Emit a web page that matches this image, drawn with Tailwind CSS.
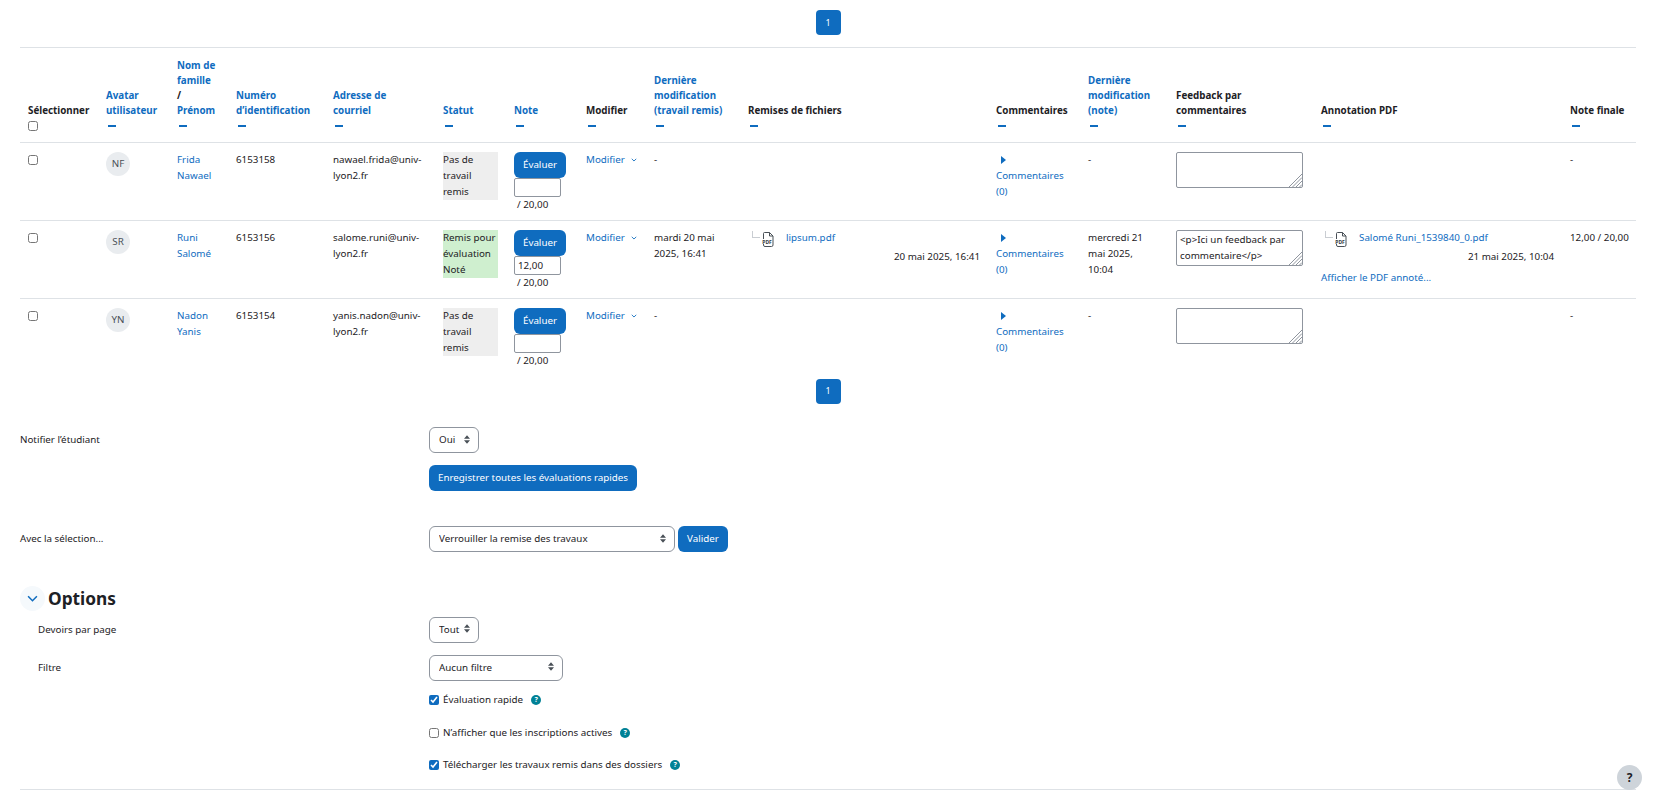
<!DOCTYPE html>
<html lang="fr">
<head>
    <meta charset="UTF-8">
    <meta name="viewport" content="width=device-width, initial-scale=1.0">
    <title>Travaux remis</title>
    <script src="https://cdn.jsdelivr.net/npm/@tailwindcss/browser@4"></script>
</head>
<body class="bg-white text-[#1d2125] font-['Noto_Sans',sans-serif] text-[9.8px] leading-[16px]">
<div class="px-5 pt-[10px] h-[808px] overflow-hidden">

    <!-- pagination haut -->
    <div class="flex justify-center mb-3">
        <a class="w-[25px] h-[25px] rounded-[4px] bg-[#0f6cbf] text-white text-[9px] flex items-center justify-center">1</a>
    </div>

    <table class="table-fixed w-[1616px] border-collapse border-t border-[#dee2e6]">
        <colgroup>
            <col class="w-[78px]"><col class="w-[71px]"><col class="w-[59px]"><col class="w-[97px]"><col class="w-[110px]">
            <col class="w-[71px]"><col class="w-[72px]"><col class="w-[68px]"><col class="w-[94px]"><col class="w-[248px]">
            <col class="w-[92px]"><col class="w-[88px]"><col class="w-[145px]"><col class="w-[249px]"><col class="w-[74px]">
        </colgroup>
        <thead>
            <tr class="h-[95px] border-b border-[#dee2e6] text-left align-bottom leading-[15px] font-bold">
                <th class="p-2 font-bold">Sélectionner<div class="h-4 flex items-center"><input type="checkbox" class="w-[10px] h-[10px] m-0"></div></th>
                <th class="p-2 font-bold text-[#0f6cbf]">Avatar utilisateur<div class="h-4 flex items-center pl-[2px]"><span class="w-2 h-[1.5px] bg-[#0f6cbf]"></span></div></th>
                <th class="p-2 font-bold text-[#0f6cbf]">Nom de<br>famille<br><span class="text-[#1d2125]">/</span><br>Prénom<div class="h-4 flex items-center pl-[2px]"><span class="w-2 h-[1.5px] bg-[#0f6cbf]"></span></div></th>
                <th class="p-2 font-bold text-[#0f6cbf]">Numéro d’identification<div class="h-4 flex items-center pl-[2px]"><span class="w-2 h-[1.5px] bg-[#0f6cbf]"></span></div></th>
                <th class="p-2 font-bold text-[#0f6cbf]">Adresse de<br>courriel<div class="h-4 flex items-center pl-[2px]"><span class="w-2 h-[1.5px] bg-[#0f6cbf]"></span></div></th>
                <th class="p-2 font-bold text-[#0f6cbf]">Statut<div class="h-4 flex items-center pl-[2px]"><span class="w-2 h-[1.5px] bg-[#0f6cbf]"></span></div></th>
                <th class="p-2 font-bold text-[#0f6cbf]">Note<div class="h-4 flex items-center pl-[2px]"><span class="w-2 h-[1.5px] bg-[#0f6cbf]"></span></div></th>
                <th class="p-2 font-bold">Modifier<div class="h-4 flex items-center pl-[2px]"><span class="w-2 h-[1.5px] bg-[#0f6cbf]"></span></div></th>
                <th class="p-2 font-bold text-[#0f6cbf]">Dernière modification (travail remis)<div class="h-4 flex items-center pl-[2px]"><span class="w-2 h-[1.5px] bg-[#0f6cbf]"></span></div></th>
                <th class="p-2 font-bold">Remises de fichiers<div class="h-4 flex items-center pl-[2px]"><span class="w-2 h-[1.5px] bg-[#0f6cbf]"></span></div></th>
                <th class="p-2 font-bold">Commentaires<div class="h-4 flex items-center pl-[2px]"><span class="w-2 h-[1.5px] bg-[#0f6cbf]"></span></div></th>
                <th class="p-2 font-bold text-[#0f6cbf]">Dernière modification (note)<div class="h-4 flex items-center pl-[2px]"><span class="w-2 h-[1.5px] bg-[#0f6cbf]"></span></div></th>
                <th class="p-2 font-bold">Feedback par commentaires<div class="h-4 flex items-center pl-[2px]"><span class="w-2 h-[1.5px] bg-[#0f6cbf]"></span></div></th>
                <th class="p-2 font-bold">Annotation PDF<div class="h-4 flex items-center pl-[2px]"><span class="w-2 h-[1.5px] bg-[#0f6cbf]"></span></div></th>
                <th class="p-2 font-bold">Note finale<div class="h-4 flex items-center pl-[2px]"><span class="w-2 h-[1.5px] bg-[#0f6cbf]"></span></div></th>
            </tr>
        </thead>
        <tbody class="align-top">
            <!-- Frida -->
            <tr class="h-[78px] border-b border-[#dee2e6]">
                <td class="px-2 pt-[9px]"><input type="checkbox" class="w-[10px] h-[10px] m-0 mt-[3px] block"></td>
                <td class="px-2 pt-[9px]"><div class="w-6 h-6 rounded-full bg-[#e9ecef] text-[#495057] flex items-center justify-center">NF</div></td>
                <td class="px-2 pt-[9px] text-[#0f6cbf]">Frida<br>Nawael</td>
                <td class="px-2 pt-[9px]">6153158</td>
                <td class="px-2 pt-[9px] break-words">nawael.frida@univ-lyon2.fr</td>
                <td class="px-2 pt-[9px]"><div class="bg-[#eeeeee]">Pas de travail remis</div></td>
                <td class="px-2 pt-[9px]">
                    <button class="block w-[52px] h-[26px] rounded-[6px] bg-[#0f6cbf] text-white">Évaluer</button>
                    <input type="text" class="block w-[47px] h-[19px] border border-[#8f959e] rounded-[2px] px-[3px]">
                    <div class="pl-[3px]">/ 20,00</div>
                </td>
                <td class="px-2 pt-[9px] text-[#0f6cbf]"><span class="flex items-center gap-[6px]">Modifier<svg class="w-[6px] h-[4px]" viewBox="0 0 7 5"><path d="M.7 1 L3.500 3.800 L6.300 1" fill="none" stroke="#0f6cbf" stroke-width="1.100"/></svg></span></td>
                <td class="px-2 pt-[9px]">-</td>
                <td class="px-2 pt-[9px]"></td>
                <td class="px-2 pt-[9px] text-[#0f6cbf]"><div class="h-4 flex items-center pl-[5px]"><svg class="w-[5px] h-[8px]" viewBox="0 0 5 8"><path d="M0 0 L5 4 L0 8 Z" fill="#0f6cbf"/></svg></div>Commentaires (0)</td>
                <td class="px-2 pt-[9px]">-</td>
                <td class="px-2 pt-[9px]">
                    <div class="relative w-[127px] h-[36px]">
                        <textarea class="block resize-none w-full h-full border border-[#8f959e] rounded-[2px] px-[3px] py-[3px]"></textarea>
                        <svg class="absolute right-[1px] bottom-[1px] w-[14px] h-[14px]" viewBox="0 0 14 14"><path d="M1 14 L14 1 M4.500 14 L14 4.500 M8 14 L14 8 M11.500 14 L14 11.500" stroke="#8f959e" stroke-width="1" fill="none"/></svg>
                    </div>
                </td>
                <td class="px-2 pt-[9px]"></td>
                <td class="px-2 pt-[9px]">-</td>
            </tr>
            <!-- Runi -->
            <tr class="h-[78px] border-b border-[#dee2e6]">
                <td class="px-2 pt-[9px]"><input type="checkbox" class="w-[10px] h-[10px] m-0 mt-[3px] block"></td>
                <td class="px-2 pt-[9px]"><div class="w-6 h-6 rounded-full bg-[#e9ecef] text-[#495057] flex items-center justify-center">SR</div></td>
                <td class="px-2 pt-[9px] text-[#0f6cbf]">Runi<br>Salomé</td>
                <td class="px-2 pt-[9px]">6153156</td>
                <td class="px-2 pt-[9px] break-words">salome.runi@univ-lyon2.fr</td>
                <td class="px-2 pt-[9px]"><div class="bg-[#cfefcf]">Remis pour évaluation<br>Noté</div></td>
                <td class="px-2 pt-[9px]">
                    <button class="block w-[52px] h-[26px] rounded-[6px] bg-[#0f6cbf] text-white">Évaluer</button>
                    <input type="text" value="12,00" class="block w-[47px] h-[19px] border border-[#8f959e] rounded-[2px] px-[3px]">
                    <div class="pl-[3px]">/ 20,00</div>
                </td>
                <td class="px-2 pt-[9px] text-[#0f6cbf]"><span class="flex items-center gap-[6px]">Modifier<svg class="w-[6px] h-[4px]" viewBox="0 0 7 5"><path d="M.7 1 L3.500 3.800 L6.300 1" fill="none" stroke="#0f6cbf" stroke-width="1.100"/></svg></span></td>
                <td class="px-2 pt-[9px]">mardi 20 mai 2025, 16:41</td>
                <td class="px-2 pt-[9px]">
                    <div class="flex items-start h-[19px]">
                        <span class="w-2 h-[7px] ml-[4px] mt-px border-l border-b border-[#c9cdd2]"></span>
                        <svg class="w-[12px] h-[15px] ml-[2px] mt-[2px]" viewBox="0 0 12 15">
                            <path d="M2.500 .5 H7.500 L11 4 V13 Q11 14.500 9.500 14.500 H3 Q1.500 14.500 1.500 13 V1.500 Q1.500 .5 2.500 .5 Z M7.500 .5 V4 H11" fill="#fff" stroke="#495057"/>
                            <rect x="0" y="7" width="10" height="5" fill="#fff"/>
                            <text x="0.300" y="11.500" font-size="5" font-weight="700" fill="#343a40">PDF</text>
                        </svg>
                        <a class="ml-3 text-[#0f6cbf]">lipsum.pdf</a>
                    </div>
                    <div class="text-right">20 mai 2025, 16:41</div>
                </td>
                <td class="px-2 pt-[9px] text-[#0f6cbf]"><div class="h-4 flex items-center pl-[5px]"><svg class="w-[5px] h-[8px]" viewBox="0 0 5 8"><path d="M0 0 L5 4 L0 8 Z" fill="#0f6cbf"/></svg></div>Commentaires (0)</td>
                <td class="px-2 pt-[9px]">mercredi 21 mai 2025, 10:04</td>
                <td class="px-2 pt-[9px]">
                    <div class="relative w-[127px] h-[36px]">
                        <textarea class="block resize-none w-full h-full border border-[#8f959e] rounded-[2px] px-[3px] py-[1px]">&lt;p&gt;Ici un feedback par commentaire&lt;/p&gt;</textarea>
                        <svg class="absolute right-[1px] bottom-[1px] w-[14px] h-[14px]" viewBox="0 0 14 14"><path d="M1 14 L14 1 M4.500 14 L14 4.500 M8 14 L14 8 M11.500 14 L14 11.500" stroke="#8f959e" stroke-width="1" fill="none"/></svg>
                    </div>
                </td>
                <td class="px-2 pt-[9px]">
                    <div class="flex items-start h-[19px]">
                        <span class="w-2 h-[7px] ml-[4px] mt-px border-l border-b border-[#c9cdd2]"></span>
                        <svg class="w-[12px] h-[15px] ml-[2px] mt-[2px]" viewBox="0 0 12 15">
                            <path d="M2.500 .5 H7.500 L11 4 V13 Q11 14.500 9.500 14.500 H3 Q1.500 14.500 1.500 13 V1.500 Q1.500 .5 2.500 .5 Z M7.500 .5 V4 H11" fill="#fff" stroke="#495057"/>
                            <rect x="0" y="7" width="10" height="5" fill="#fff"/>
                            <text x="0.300" y="11.500" font-size="5" font-weight="700" fill="#343a40">PDF</text>
                        </svg>
                        <a class="ml-3 text-[#0f6cbf]">Salomé Runi_1539840_0.pdf</a>
                    </div>
                    <div class="text-right">21 mai 2025, 10:04</div>
                    <a class="block mt-[5px] text-[#0f6cbf]">Afficher le PDF annoté...</a>
                </td>
                <td class="px-2 pt-[9px] whitespace-nowrap">12,00 / 20,00</td>
            </tr>
            <!-- Nadon -->
            <tr class="h-[78px]">
                <td class="px-2 pt-[9px]"><input type="checkbox" class="w-[10px] h-[10px] m-0 mt-[3px] block"></td>
                <td class="px-2 pt-[9px]"><div class="w-6 h-6 rounded-full bg-[#e9ecef] text-[#495057] flex items-center justify-center">YN</div></td>
                <td class="px-2 pt-[9px] text-[#0f6cbf]">Nadon<br>Yanis</td>
                <td class="px-2 pt-[9px]">6153154</td>
                <td class="px-2 pt-[9px] break-words">yanis.nadon@univ-lyon2.fr</td>
                <td class="px-2 pt-[9px]"><div class="bg-[#eeeeee]">Pas de travail remis</div></td>
                <td class="px-2 pt-[9px]">
                    <button class="block w-[52px] h-[26px] rounded-[6px] bg-[#0f6cbf] text-white">Évaluer</button>
                    <input type="text" class="block w-[47px] h-[19px] border border-[#8f959e] rounded-[2px] px-[3px]">
                    <div class="pl-[3px]">/ 20,00</div>
                </td>
                <td class="px-2 pt-[9px] text-[#0f6cbf]"><span class="flex items-center gap-[6px]">Modifier<svg class="w-[6px] h-[4px]" viewBox="0 0 7 5"><path d="M.7 1 L3.500 3.800 L6.300 1" fill="none" stroke="#0f6cbf" stroke-width="1.100"/></svg></span></td>
                <td class="px-2 pt-[9px]">-</td>
                <td class="px-2 pt-[9px]"></td>
                <td class="px-2 pt-[9px] text-[#0f6cbf]"><div class="h-4 flex items-center pl-[5px]"><svg class="w-[5px] h-[8px]" viewBox="0 0 5 8"><path d="M0 0 L5 4 L0 8 Z" fill="#0f6cbf"/></svg></div>Commentaires (0)</td>
                <td class="px-2 pt-[9px]">-</td>
                <td class="px-2 pt-[9px]">
                    <div class="relative w-[127px] h-[36px]">
                        <textarea class="block resize-none w-full h-full border border-[#8f959e] rounded-[2px] px-[3px] py-[3px]"></textarea>
                        <svg class="absolute right-[1px] bottom-[1px] w-[14px] h-[14px]" viewBox="0 0 14 14"><path d="M1 14 L14 1 M4.500 14 L14 4.500 M8 14 L14 8 M11.500 14 L14 11.500" stroke="#8f959e" stroke-width="1" fill="none"/></svg>
                    </div>
                </td>
                <td class="px-2 pt-[9px]"></td>
                <td class="px-2 pt-[9px]">-</td>
            </tr>
        </tbody>
    </table>

    <!-- pagination bas -->
    <div class="flex justify-center mt-[2px]">
        <a class="w-[25px] h-[25px] rounded-[4px] bg-[#0f6cbf] text-white text-[9px] flex items-center justify-center">1</a>
    </div>

    <!-- enregistrement rapide -->
    <div class="grid grid-cols-[409px_1fr] items-center mt-[23px]">
        <div>Notifier l’étudiant</div>
        <div class="relative w-[50px]">
            <select class="appearance-none block w-full h-[26px] border border-[#8f959e] rounded-[6px] pl-[9px] bg-white"><option>Oui</option></select>
            <svg class="absolute right-[9px] top-[8px] w-[6px] h-[9px]" viewBox="0 0 7 10"><path d="M3.500 0 L7 4 H0 Z M3.500 10 L7 6 H0 Z" fill="#495057"/></svg>
        </div>
    </div>
    <div class="pl-[409px] mt-3">
        <button class="w-[208px] h-[26px] rounded-[6px] bg-[#0f6cbf] text-white">Enregistrer toutes les évaluations rapides</button>
    </div>

    <!-- avec la sélection -->
    <div class="grid grid-cols-[409px_1fr] items-center mt-[35px]">
        <div>Avec la sélection...</div>
        <div class="flex gap-[3px]">
            <div class="relative w-[246px]">
                <select class="appearance-none block w-full h-[26px] border border-[#8f959e] rounded-[6px] pl-[9px] bg-white"><option>Verrouiller la remise des travaux</option></select>
                <svg class="absolute right-[9px] top-[8px] w-[6px] h-[9px]" viewBox="0 0 7 10"><path d="M3.500 0 L7 4 H0 Z M3.500 10 L7 6 H0 Z" fill="#495057"/></svg>
            </div>
            <button class="w-[50px] h-[26px] rounded-[6px] bg-[#0f6cbf] text-white">Valider</button>
        </div>
    </div>

    <!-- options -->
    <div class="flex items-center gap-[3px] mt-[34px] h-[25px]">
        <span class="w-[25px] h-[25px] rounded-full bg-[#f5f9fc] flex items-center justify-center">
            <svg class="w-[11px] h-[11px]" viewBox="0 0 10 10"><path d="M1 3 L5 7 L9 3" fill="none" stroke="#0f6cbf" stroke-width="1.400"/></svg>
        </span>
        <h3 class="text-[17.3px] font-bold leading-[25px]">Options</h3>
    </div>
    <div class="grid grid-cols-[409px_1fr] items-center mt-[6px]">
        <div class="pl-[18px]">Devoirs par page</div>
        <div class="relative w-[50px]">
            <select class="appearance-none block w-full h-[26px] border border-[#8f959e] rounded-[6px] pl-[9px] bg-white"><option>Tout</option></select>
            <svg class="absolute right-[9px] top-[7px] w-[6px] h-[9px]" viewBox="0 0 7 10"><path d="M3.500 0 L7 4 H0 Z M3.500 10 L7 6 H0 Z" fill="#495057"/></svg>
        </div>
    </div>
    <div class="grid grid-cols-[409px_1fr] items-center mt-3">
        <div class="pl-[18px]">Filtre</div>
        <div class="relative w-[134px]">
            <select class="appearance-none block w-full h-[26px] border border-[#8f959e] rounded-[6px] pl-[9px] bg-white"><option>Aucun filtre</option></select>
            <svg class="absolute right-[9px] top-[7px] w-[6px] h-[9px]" viewBox="0 0 7 10"><path d="M3.500 0 L7 4 H0 Z M3.500 10 L7 6 H0 Z" fill="#495057"/></svg>
        </div>
    </div>
    <div class="pl-[409px] mt-[11px] flex items-center h-4">
        <input type="checkbox" checked class="w-[10px] h-[10px] m-0 accent-[#0f6cbf]">
        <span class="ml-1">Évaluation rapide</span>
        <span class="ml-2 w-[10px] h-[10px] rounded-full bg-[#008196] text-white text-[7px] leading-[10px] font-bold text-center">?</span>
    </div>
    <div class="pl-[409px] mt-[17px] flex items-center h-4">
        <input type="checkbox" class="w-[10px] h-[10px] m-0">
        <span class="ml-1">N’afficher que les inscriptions actives</span>
        <span class="ml-2 w-[10px] h-[10px] rounded-full bg-[#008196] text-white text-[7px] leading-[10px] font-bold text-center">?</span>
    </div>
    <div class="pl-[409px] mt-[16px] flex items-center h-4">
        <input type="checkbox" checked class="w-[10px] h-[10px] m-0 accent-[#0f6cbf]">
        <span class="ml-1">Télécharger les travaux remis dans des dossiers</span>
        <span class="ml-2 w-[10px] h-[10px] rounded-full bg-[#008196] text-white text-[7px] leading-[10px] font-bold text-center">?</span>
    </div>
    <div class="mt-[16px] border-t border-[#dee2e6]"></div>
</div>

<!-- bouton aide -->
<button class="fixed left-[1617px] top-[765px] w-[25px] h-[25px] rounded-full bg-[#ced4da] text-[#1d2125] text-[12px] font-bold flex items-center justify-center">?</button>
</body>
</html>
